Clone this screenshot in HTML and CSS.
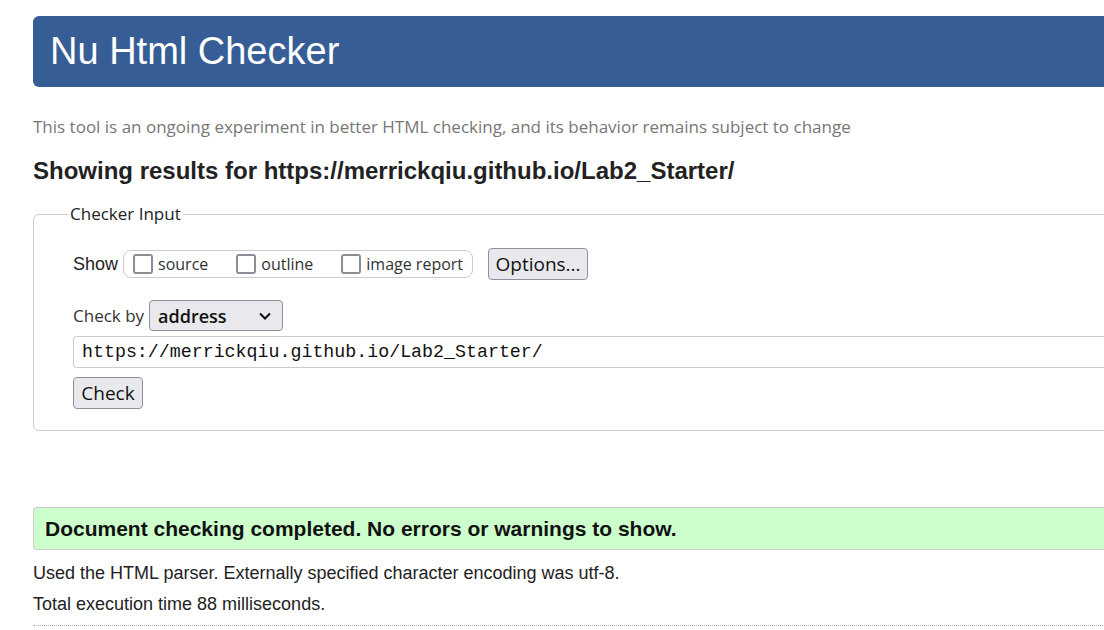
FILE: index.html
```html
<!DOCTYPE html>
<html>
<head>
<meta charset="utf-8">
<title>Nu Html Checker</title>
<link rel="stylesheet" href="styles.css">
</head>
<body>
<div class="page">
  <h1 class="banner">Nu Html Checker</h1>
  <p class="intro">This tool is an ongoing experiment in better HTML checking, and its behavior remains subject to change</p>
  <h2 class="showing">Showing results for https://merrickqiu.github.io/Lab2_Starter/</h2>
  <fieldset class="input-box">
    <legend>Checker Input</legend>
    <div class="row show-row">
      <span class="show-label">Show</span>
      <span class="opts">
        <label class="opt"><span class="cb"></span>source</label>
        <label class="opt"><span class="cb"></span>outline</label>
        <label class="opt"><span class="cb"></span>image report</label>
      </span>
      <button class="btn options">Options...</button>
    </div>
    <div class="row by-row">
      <span class="by-label">Check by</span>
      <span class="select">address
        <svg class="chev" width="14" height="10" viewBox="0 0 14 10"><path d="M2 2.5 L7 7.5 L12 2.5" fill="none" stroke="#111" stroke-width="2"/></svg>
      </span>
    </div>
    <div class="url">https://merrickqiu.github.io/Lab2_Starter/</div>
    <button class="btn check">Check</button>
  </fieldset>
  <p class="success">Document checking completed. No errors or warnings to show.</p>
  <p class="meta">Used the HTML parser. Externally specified character encoding was utf-8.</p>
  <p class="meta">Total execution time 88 milliseconds.</p>
  <hr class="dots">
</div>
</body>
</html>
```
FILE: styles.css
```css
html, body {
  margin: 0;
  padding: 0;
  overflow: hidden;
  background: #fff;
}
body {
  width: 1104px;
  height: 630px;
}
.page {
  width: 1180px;
  padding: 16px 0 0 33px;
  font-family: "Liberation Sans", Arial, sans-serif;
  color: #222;
}
.banner {
  margin: 0;
  height: 71px;
  line-height: 71px;
  padding-left: 17px;
  background: #365d95;
  color: #fff;
  font-weight: normal;
  font-size: 38px;
  border-radius: 6px;
}
.intro {
  margin: 28px 0 0;
  font-family: "Open Sans", "Noto Sans", sans-serif;
  font-size: 17px;
  line-height: 24px;
  color: #777;
}
.showing {
  margin: 18px 0 0;
  font-size: 24px;
  line-height: 28px;
  color: #222;
}
.input-box {
  margin: 18px 0 0;
  padding: 23px 0 21px 39px;
  border: 1px solid #ccc;
  border-radius: 6px;
  font-family: "Open Sans", "Noto Sans", sans-serif;
  font-size: 16px;
}
.input-box legend {
  margin-left: -5px;
  padding: 0 2px;
  color: #222;
  font-size: 17px;
  line-height: 22px;
}
.row {
  display: flex;
  align-items: center;
}
.show-label {
  font-family: "Liberation Sans", Arial, sans-serif;
  font-size: 18px;
  color: #222;
  margin-right: 5px;
}
.opts {
  display: flex;
  align-items: center;
  height: 26px;
  border: 1px solid #ccc;
  border-radius: 8px;
  padding: 0 9px;
  gap: 28px;
}
.opt {
  display: flex;
  align-items: center;
  gap: 5px;
  color: #333;
}
.cb {
  width: 16px;
  height: 16px;
  border: 2px solid #8c8c98;
  border-radius: 3px;
  background: #fff;
}
.btn {
  font-family: "Open Sans", "Noto Sans", sans-serif;
  font-size: 19px;
  color: #111;
  background: #e9e9ed;
  border: 1px solid #8f8f9d;
  border-radius: 4px;
  height: 32px;
  padding: 0;
  cursor: default;
}
.options {
  margin-left: 15px;
  width: 100px;
}
.by-row {
  margin-top: 20px;
}
.by-label {
  color: #333;
  font-size: 17px;
  margin-right: 5px;
}
.select {
  display: flex;
  align-items: center;
  justify-content: space-between;
  box-sizing: border-box;
  width: 134px;
  height: 31px;
  padding: 0 10px 0 8px;
  background: #e9e9ed;
  border: 1px solid #8f8f9d;
  border-radius: 4px;
  font-size: 18px;
  font-weight: 600;
  color: #111;
}
.url {
  margin-top: 5px;
  box-sizing: border-box;
  height: 32px;
  line-height: 30px;
  padding-left: 8px;
  border: 1px solid #ccc;
  border-right: none;
  border-radius: 4px 0 0 4px;
  font-family: "Liberation Mono", "DejaVu Sans Mono", monospace;
  font-size: 18.3px;
  color: #111;
}
.check {
  margin-top: 9px;
  width: 70px;
  display: block;
}
.success {
  margin: 76px 0 0;
  height: 41px;
  line-height: 41px;
  padding-left: 11px;
  background: #ccffcc;
  border: 1px solid #ccc;
  border-right: none;
  border-radius: 4px 0 0 4px;
  font-weight: bold;
  font-size: 21px;
  color: #111;
}
.meta {
  margin: 12px 0 0;
  font-size: 18px;
  line-height: 22px;
  color: #222;
}
.meta + .meta {
  margin-top: 9px;
}
.dots {
  margin: 10px 0 0;
  border: none;
  border-top: 1px dotted #aaa;
}
```
